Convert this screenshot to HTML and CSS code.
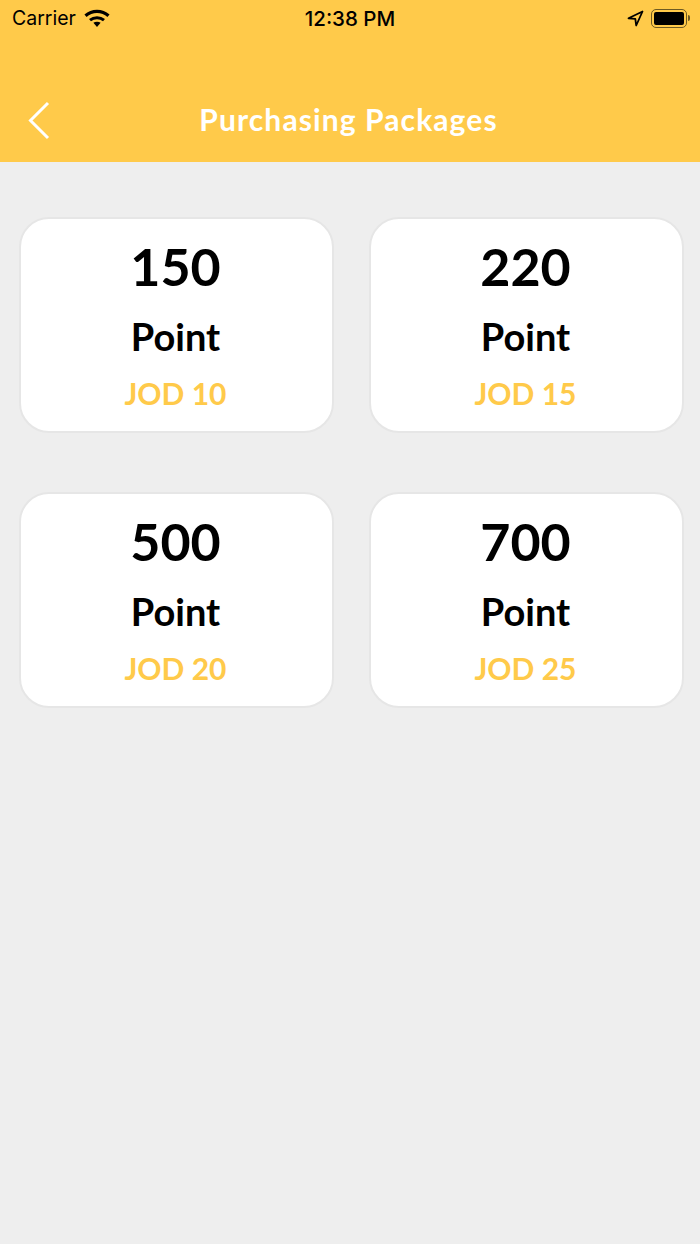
FILE: index.html
```html
<!DOCTYPE html>
<html lang="en">
<head>
    <meta charset="UTF-8">
    <meta name="viewport" content="width=device-width, initial-scale=1.0">
    <title>Purchasing Packages</title>
    <link rel="stylesheet" href="styles.css">
</head>
<body>

    <header class="header">
        <div class="status">
            <div class="status-left">
                <span>Carrier</span>
                <svg class="wifi" width="26" height="20" viewBox="0 0 26 20">
                    <path d="M13 19l-3.600-4.200c2-1.500 5.200-1.500 7.200 0z" fill="#000"/>
                    <path d="M1.500 7.800C8 2 18 2 24.500 7.800" fill="none" stroke="#000" stroke-width="3.200"/>
                    <path d="M6 12.200c4-3.400 10-3.400 14 0" fill="none" stroke="#000" stroke-width="3"/>
                </svg>
            </div>
            <div class="status-time">12:38 PM</div>
            <div class="status-right">
                <svg width="17" height="17" viewBox="0 0 17 17">
                    <path d="M15.500 1.500L1.500 8.300l6.800 .6 .9 6.600z" fill="none" stroke="#000" stroke-width="1.800" stroke-linejoin="round"/>
                </svg>
                <div class="battery"><div class="battery-fill"></div></div>
                <div class="battery-tip"></div>
            </div>
        </div>
        <div class="navbar">
            <svg class="back" width="24" height="40" viewBox="0 0 24 40">
                <path d="M22 3L4.500 20.500 22 38" fill="none" stroke="#fff" stroke-width="3"/>
            </svg>
            <h1>Purchasing Packages</h1>
        </div>
    </header>

    <main class="packages">
        <div class="card">
            <div class="points">150</div>
            <div class="label">Point</div>
            <div class="price">JOD 10</div>
        </div>
        <div class="card">
            <div class="points">220</div>
            <div class="label">Point</div>
            <div class="price">JOD 15</div>
        </div>
        <div class="card">
            <div class="points">500</div>
            <div class="label">Point</div>
            <div class="price">JOD 20</div>
        </div>
        <div class="card">
            <div class="points">700</div>
            <div class="label">Point</div>
            <div class="price">JOD 25</div>
        </div>
    </main>

</body>
</html>
```

FILE: styles.css
```css
body {
    font-family: "Lato", "Open Sans", sans-serif;
    background-color: #eeeeee;
    margin: 0;
    padding: 0;
    min-height: 1244px;
}

.header {
    height: 162px;
    background-color: #ffca4a;
}

.status {
    height: 36px;
    padding: 0 10px 0 12px;
    display: flex;
    align-items: center;
    justify-content: space-between;
    position: relative;
    font-family: "Inter", sans-serif;
    font-size: 19.5px;
    color: #000;
}

.status-left {
    display: flex;
    align-items: center;
    gap: 8px;
}

.status-time {
    position: absolute;
    left: 0;
    right: 0;
    text-align: center;
    font-size: 20.5px;
    font-weight: 500;
}

.status-right {
    display: flex;
    align-items: center;
}

.battery {
    width: 36px;
    height: 19px;
    margin-left: 7px;
    padding: 2px;
    box-sizing: border-box;
    border: 1px solid #6e5a22;
    border-radius: 5px;
}

.battery-fill {
    height: 100%;
    background-color: #000;
    border-radius: 2px;
}

.battery-tip {
    width: 2px;
    height: 6px;
    margin-left: 1px;
    background-color: #6e5a22;
    border-radius: 0 2px 2px 0;
}

.navbar {
    height: 126px;
    position: relative;
    padding: 63px 3px 0 0;
    box-sizing: border-box;
}

.back {
    position: absolute;
    left: 26px;
    top: 64px;
}

h1 {
    margin: 0;
    font-size: 30px;
    line-height: 40px;
    letter-spacing: 1.1px;
    text-align: center;
    font-weight: 700;
    color: #fff;
}

.packages {
    display: grid;
    grid-template-columns: 315px 315px;
    column-gap: 35px;
    row-gap: 59px;
    padding: 55px 16px 0 19px;
}

.card {
    height: 216px;
    box-sizing: border-box;
    background: white;
    border: 2px solid #e6e6e6;
    border-radius: 30px;
    text-align: center;
    padding: 19px 2px 0 0;
}

.points {
    font-size: 52px;
    line-height: 56px;
    font-weight: 700;
    color: #000;
}

.label {
    font-size: 38px;
    line-height: 44px;
    margin-top: 20px;
    font-weight: 700;
    color: #000;
}

.price {
    font-size: 30px;
    line-height: 36px;
    margin-top: 17px;
    font-weight: 700;
    color: #ffca4a;
}
```
